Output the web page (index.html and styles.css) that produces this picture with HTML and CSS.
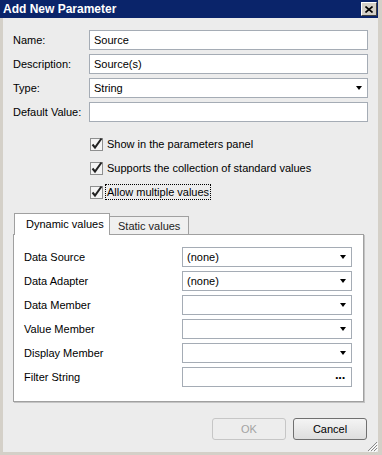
FILE: index.html
```html
<!DOCTYPE html>
<html lang="en">
<head>
    <meta charset="UTF-8">
    <title>Add New Parameter</title>
    <link rel="stylesheet" href="styles.css">
</head>
<body>
    <div class="window">
        <div class="titlebar">
            <span class="title">Add New Parameter</span>
            <span class="close-btn">
                <svg width="8" height="7" viewBox="0 0 8 7"><path d="M0.5 0.5 L7.5 6.5 M7.5 0.5 L0.5 6.5" stroke="#000" stroke-width="1.6"/></svg>
            </span>
        </div>
        <div class="client">
            <!-- Parameter fields -->
            <div class="fields">
                <label>Name:</label>
                <div class="edit">Source</div>
                <label>Description:</label>
                <div class="edit">Source(s)</div>
                <label>Type:</label>
                <div class="edit combo">String<span class="arrow"></span></div>
                <label>Default Value:</label>
                <div class="edit"></div>
            </div>

            <!-- Options -->
            <div class="checks">
                <div class="check-row">
                    <svg class="checkbox" width="14" height="14" viewBox="0 0 14 14"><rect x="0.5" y="1.5" width="12" height="12" fill="#f4f4f4" stroke="#8e8f8f"/><path d="M2.5 7.5 L5 10.5 L11.5 1.5" fill="none" stroke="#222" stroke-width="2"/></svg>
                    <span>Show in the parameters panel</span>
                </div>
                <div class="check-row">
                    <svg class="checkbox" width="14" height="14" viewBox="0 0 14 14"><rect x="0.5" y="1.5" width="12" height="12" fill="#f4f4f4" stroke="#8e8f8f"/><path d="M2.5 7.5 L5 10.5 L11.5 1.5" fill="none" stroke="#222" stroke-width="2"/></svg>
                    <span>Supports the collection of standard values</span>
                </div>
                <div class="check-row">
                    <svg class="checkbox" width="14" height="14" viewBox="0 0 14 14"><rect x="0.5" y="1.5" width="12" height="12" fill="#f4f4f4" stroke="#8e8f8f"/><path d="M2.5 7.5 L5 10.5 L11.5 1.5" fill="none" stroke="#222" stroke-width="2"/></svg>
                    <span class="focused">Allow multiple values</span>
                </div>
            </div>

            <!-- Tabs -->
            <div class="tab-strip">
                <div class="tab active">Dynamic values</div>
                <div class="tab">Static values</div>
            </div>
            <div class="tab-panel">
                <label>Data Source</label>
                <div class="edit combo">(none)<span class="arrow"></span></div>
                <label>Data Adapter</label>
                <div class="edit combo">(none)<span class="arrow"></span></div>
                <label>Data Member</label>
                <div class="edit combo"><span class="arrow"></span></div>
                <label>Value Member</label>
                <div class="edit combo"><span class="arrow"></span></div>
                <label>Display Member</label>
                <div class="edit combo"><span class="arrow"></span></div>
                <label>Filter String</label>
                <div class="edit combo"><span class="dots">&middot;&middot;&middot;</span></div>
            </div>

            <div class="buttons">
                <div class="btn disabled">OK</div>
                <div class="btn">Cancel</div>
            </div>

            <svg class="grip" width="12" height="12" viewBox="0 0 12 12">
                <path d="M11 2 L2 11 M11 5 L5 11 M11 8 L8 11" stroke="#8a8a8a" stroke-width="1"/>
                <path d="M12 3 L3 12 M12 6 L6 12 M12 9 L9 12" stroke="#fff" stroke-width="1"/>
            </svg>
        </div>
    </div>
</body>
</html>
```

FILE: styles.css
```css
body {
    margin: 0;
    font-family: "Liberation Sans", Arial, sans-serif;
    font-size: 11px;
    color: #000;
    background-color: #d4d0c8;
}
.window {
    width: 382px;
    height: 455px;
    display: flex;
    flex-direction: column;
    background-color: #d4d0c8;
}
.titlebar {
    height: 18px;
    margin-right: 4px;
    background-color: #0a246a;
    display: flex;
    align-items: center;
    justify-content: space-between;
    padding-left: 3px;
}
.title {
    color: #fff;
    font-weight: bold;
    font-size: 12px;
}
.close-btn {
    width: 14px;
    height: 12px;
    margin-right: 1px;
    background-color: #d4d0c8;
    border: 1px solid;
    border-color: #fff #404040 #404040 #fff;
    display: flex;
    align-items: center;
    justify-content: center;
}
.client {
    position: relative;
    flex: 1;
    margin: 0 4px 3px 3px;
    padding: 12px 10px 0 10px;
    background-color: #ececec;
}
.fields {
    display: grid;
    grid-template-columns: 76px 279px;
    grid-auto-rows: 20px;
    row-gap: 4px;
    align-items: center;
}
.edit {
    height: 20px;
    box-sizing: border-box;
    border: 1px solid #a5acb5;
    background-color: #fff;
    padding: 0 4px;
    display: flex;
    align-items: center;
    justify-content: space-between;
}
.arrow {
    width: 0;
    height: 0;
    margin-left: auto;
    margin-right: 1px;
    border-left: 3.5px solid transparent;
    border-right: 3.5px solid transparent;
    border-top: 4px solid #000;
}
.dots {
    margin-left: auto;
    font-weight: bold;
    font-size: 13px;
    letter-spacing: -1px;
    margin-right: 2px;
}
.checks {
    margin-top: 14px;
    padding-left: 77px;
    display: flex;
    flex-direction: column;
    gap: 8px;
}
.check-row {
    height: 16px;
    display: flex;
    align-items: center;
    gap: 3px;
}
.checkbox {
    margin-top: -1px;
}
.focused {
    outline: 1px dotted #000;
    outline-offset: 1px;
}
.tab-strip {
    margin-top: 13px;
    margin-left: 1px;
    height: 21px;
    display: flex;
    align-items: flex-end;
}
.tab {
    height: 18px;
    box-sizing: border-box;
    padding: 0 8px;
    border: 1px solid #a0a0a0;
    border-bottom: none;
    border-left: none;
    background-color: #f0f0f0;
    color: #222;
    display: flex;
    align-items: center;
}
.tab.active {
    position: relative;
    z-index: 1;
    height: 22px;
    margin-bottom: -1px;
    width: 96px;
    padding: 0 0 2px 11px;
    border-left: 1px solid #a0a0a0;
    background-color: #fff;
    color: #000;
}
.tab-panel {
    width: 351px;
    box-sizing: border-box;
    border: 1px solid #a0a0a0;
    box-shadow: 1px 1px 0 #c4c4c4;
    background-color: #fff;
    padding: 12px 10px 14px 10px;
    display: grid;
    grid-template-columns: 158px 170px;
    grid-auto-rows: 20px;
    row-gap: 4px;
    align-items: center;
}
.buttons {
    margin-top: 16px;
    margin-right: 1px;
    display: flex;
    justify-content: flex-end;
    gap: 7px;
}
.btn {
    width: 74px;
    height: 22px;
    box-sizing: border-box;
    border: 1px solid #707070;
    border-radius: 3px;
    background: linear-gradient(#f4f4f4, #dedede);
    display: flex;
    align-items: center;
    justify-content: center;
}
.btn.disabled {
    border-color: #c6c6c6;
    background: #ededed;
    color: #a3a3a3;
}
.grip {
    position: absolute;
    right: 0;
    bottom: 0;
}
```
